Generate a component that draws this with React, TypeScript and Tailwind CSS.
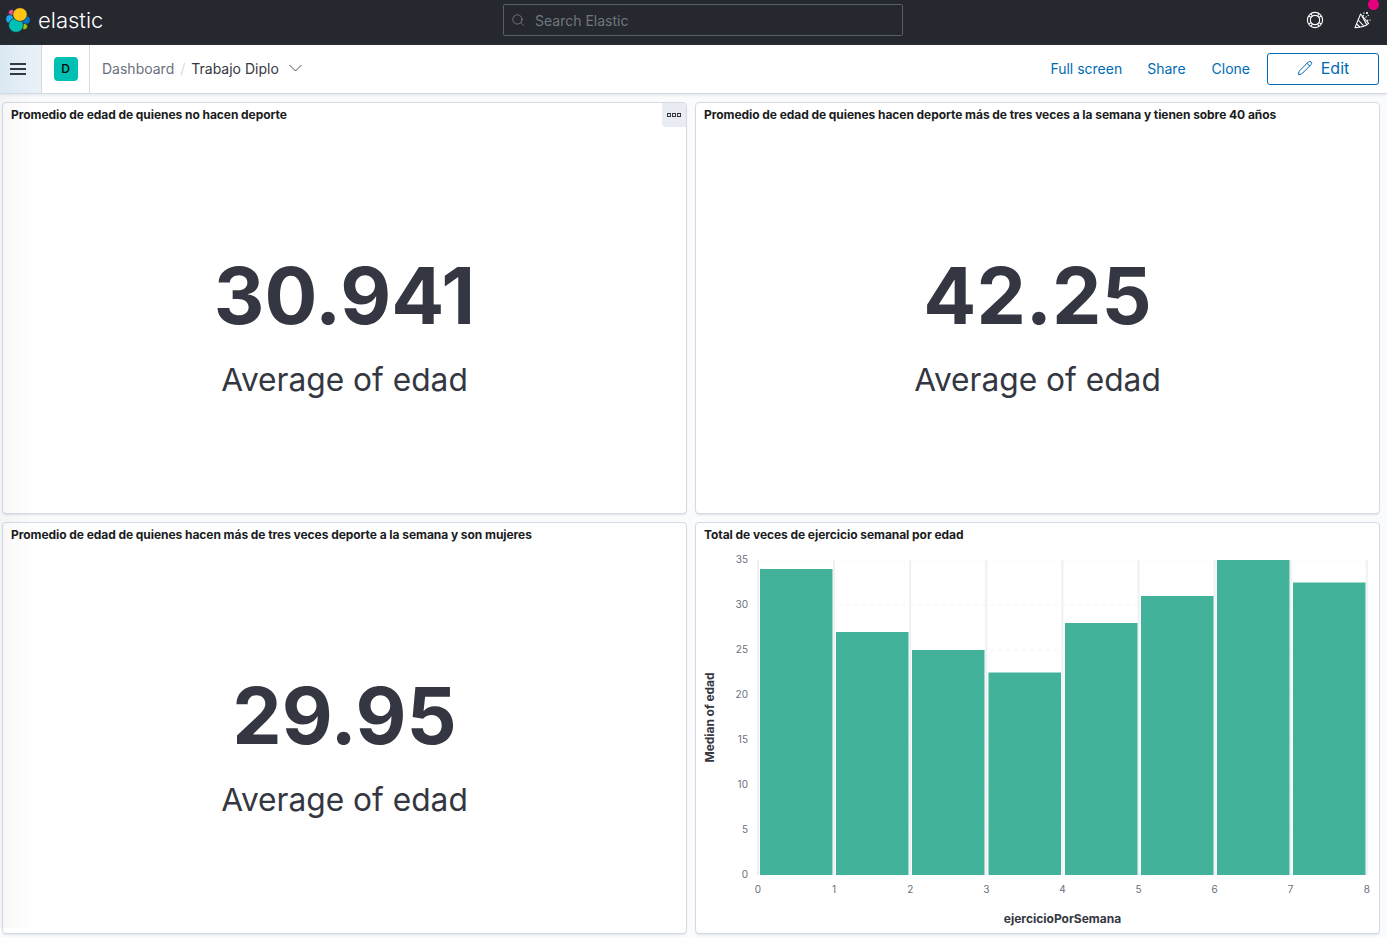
import { Pencil, Search } from "lucide-react";

const bars = [
  { x: 760, v: 34 },
  { x: 836, v: 27 },
  { x: 912, v: 25 },
  { x: 988.5, v: 22.5 },
  { x: 1065, v: 28 },
  { x: 1141, v: 31 },
  { x: 1217, v: 35 },
  { x: 1293, v: 32.5 },
];

// the svg box starts at the panel's left edge, below the title
const offsetX = 696;
const offsetY = 546;
const baseY = 875 - offsetY;
const perUnit = 9;

function ElasticLogo() {
  return (
    <svg width="26" height="26" viewBox="5 7 26 26" className="shrink-0" stroke="#25282f" strokeWidth="0.7">
      <circle cx="11.5" cy="12.5" r="3" fill="#f04e98" />
      <ellipse cx="9.8" cy="19" rx="4" ry="4.2" fill="#1ba9f5" />
      <ellipse cx="26" cy="20" rx="4.4" ry="4.4" fill="#0077cc" />
      <circle cx="24.5" cy="26.5" r="3" fill="#93c90e" />
      <ellipse cx="16" cy="25.2" rx="7.4" ry="7.2" fill="#00bfb3" />
      <ellipse cx="20" cy="14.5" rx="7.2" ry="6.8" fill="#fec514" />
    </svg>
  );
}

function HelpIcon() {
  return (
    <svg width="18" height="18" viewBox="0 0 18 18" fill="none" stroke="#fff" strokeWidth="1.1">
      <circle cx="9" cy="9" r="7.6" />
      <circle cx="9" cy="9" r="4.6" />
      <path d="M2.9 5.2 5.6 6.6M5.2 2.9 6.6 5.6M15.1 5.2 12.4 6.6M12.8 2.9 11.4 5.6M2.9 12.8 5.6 11.4M5.2 15.1 6.6 12.4M15.1 12.8 12.4 11.4M12.8 15.1 11.4 12.4" />
    </svg>
  );
}

function NewsIcon() {
  return (
    <svg width="18" height="18" viewBox="0 0 18 18" fill="none" stroke="#fff" strokeWidth="1.1" strokeLinejoin="round">
      <path d="M1 16.6 6.6 3 14.6 12.4C12 15 6 16.6 1 16.6Z" />
      <path d="M4.2 9 9.6 14.8M2.6 13 6 16M8 5 12.6 13.6" />
      <path d="M10 1.5 9.4 5.2M11.6 6.4 15 4M13 9.4 16.6 9" strokeDasharray="1.4 1.2" />
      <circle cx="13" cy="2" r="0.5" fill="#fff" />
    </svg>
  );
}

function MetricPanel({ title, value, showMenu }: { title: string; value: string; showMenu?: boolean }) {
  return (
    <div className="relative flex flex-col rounded border border-[#d3dae6] bg-white shadow-[0_2px_2px_-1px_rgba(152,162,179,0.3)]">
      <div className="h-6 px-2 pt-[5px] text-[12px] leading-[14px] font-bold tracking-[-0.06px] text-[#1a1c21]">{title}</div>
      {showMenu && (
        <div className="absolute right-0 top-0 flex h-6 w-6 items-center justify-center gap-[1px] rounded-bl rounded-tr bg-[#e9edf3]">
          <span className="h-[4px] w-[4px] border border-[#343741]" />
          <span className="h-[4px] w-[4px] border border-[#343741]" />
          <span className="h-[4px] w-[4px] border border-[#343741]" />
        </div>
      )}
      <div className="flex flex-1 flex-col items-center justify-center pt-[6px] text-[#343741]">
        <div className="text-[78.5px] leading-[100px] font-bold">{value}</div>
        <div className="mt-[14px] text-[31.7px] leading-[40px]">Average of edad</div>
      </div>
    </div>
  );
}

function BarChart() {
  const ticksY = [0, 5, 10, 15, 20, 25, 30, 35];
  const ticksX = [0, 1, 2, 3, 4, 5, 6, 7, 8];
  return (
    <svg width="683" height="386" className="block" style={{ fontFamily: "Inter, sans-serif" }}>
      {ticksY.slice(1).map((t) => (
        <line
          key={t}
          x1={758 - offsetX}
          x2={1367 - offsetX}
          y1={baseY - t * perUnit}
          y2={baseY - t * perUnit}
          stroke="#f3f4f7"
          strokeDasharray="4 4"
        />
      ))}
      {ticksX.map((t) => (
        <line
          key={t}
          x1={758 + t * 76.1 - offsetX}
          x2={758 + t * 76.1 - offsetX}
          y1={baseY - 315}
          y2={baseY}
          stroke="#eef0f4"
          strokeWidth="2"
        />
      ))}
      {bars.map((b) => (
        <rect key={b.x} x={b.x - offsetX} y={baseY - b.v * perUnit} width="72.5" height={b.v * perUnit} fill="#43b29a" />
      ))}
      {ticksY.map((t) => (
        <text key={t} x={748 - offsetX} y={baseY - t * perUnit + 2.5} textAnchor="end" fontSize="10" fill="#69707d">
          {t}
        </text>
      ))}
      {ticksX.map((t) => (
        <text key={t} x={758 + t * 76.1 - offsetX} y={893 - offsetY} textAnchor="middle" fontSize="10" fill="#69707d">
          {t}
        </text>
      ))}
      <text
        transform={`translate(${714 - offsetX} ${717.5 - offsetY}) rotate(-90)`}
        textAnchor="middle"
        fontSize="12"
        fontWeight="700"
        letterSpacing="-0.06"
        fill="#343741"
      >
        Median of edad
      </text>
      <text x={1062.5 - offsetX} y={923 - offsetY} textAnchor="middle" fontSize="12" fontWeight="700" fill="#343741">
        ejercicioPorSemana
      </text>
    </svg>
  );
}

export default function App() {
  return (
    <div className="h-[938px] overflow-hidden bg-[#fafbfd] font-['Inter',sans-serif]">
      <header className="flex h-[45px] items-center bg-[#25282f] pb-[5px] pl-[5px] pr-[15px]">
        <div className="flex w-[498px] items-center gap-[7px]">
          <ElasticLogo />
          <span className="text-[22px] leading-none font-light text-white">elastic</span>
        </div>
        <div className="flex h-[32px] w-[400px] items-center gap-[10px] rounded-[2px] border border-[#585c64] pl-[7px]">
          <Search size={14} strokeWidth={1} className="text-[#a0a3a8]" />
          <span className="text-[14px] text-[#72767d]">Search Elastic</span>
        </div>
        <div className="relative flex flex-1 items-center justify-end gap-[30px]">
          <HelpIcon />
          <NewsIcon />
          <span className="absolute -top-[12px] right-[-7px] h-[11px] w-[11px] rounded-full bg-[#e6007e]" />
        </div>
      </header>

      <nav className="flex h-[49px] items-center border-b border-[#d3dae6] bg-white pr-2 shadow-[0_1px_3px_rgba(152,162,179,0.25)]">
        <div className="flex h-full w-[42px] items-center border-r border-[#d3dae6] bg-gradient-to-r from-[#dbe8f2] to-[#eaf2f8] pb-[1px] pl-[10px]">
          <div className="flex w-[16px] flex-col gap-[3px]">
            <span className="h-[2px] bg-[#343741]" />
            <span className="h-[2px] bg-[#343741]" />
            <span className="h-[2px] bg-[#343741]" />
          </div>
        </div>
        <div className="flex h-full w-[48px] items-center justify-center border-r border-[#d3dae6]">
          <div className="flex h-6 w-6 items-center justify-center rounded bg-[#00bfb3] text-[12px] font-medium text-black">D</div>
        </div>
        <div className="flex flex-1 items-center pb-[2px] pl-[12px] text-[14px]">
          <span className="text-[#69707d]">Dashboard</span>
          <span className="mx-[6px] text-[#d3dae6]">/</span>
          <span className="text-[#343741]">Trabajo Diplo</span>
          <svg width="13" height="8" viewBox="0 0 13 8" fill="none" stroke="#343741" strokeWidth="0.9" className="ml-[10px]">
            <path d="M0.5 1 6.5 7 12.5 1" />
          </svg>
        </div>
        <div className="flex items-center text-[14px] text-[#006bb4]">
          <span className="mb-[2px] mr-[25px]">Full screen</span>
          <span className="mb-[2px] mr-[26px]">Share</span>
          <span className="mb-[2px] mr-[17px]">Clone</span>
          <div className="flex h-[32px] w-[112px] items-center justify-center gap-[8px] rounded-[3px] border border-[#006bb4] pb-[2px] text-[16px]">
            <Pencil size={16} strokeWidth={1.5} />
            <span>Edit</span>
          </div>
        </div>
      </nav>

      <main className="relative grid grid-cols-[685px_685px] grid-rows-[412px_412px] gap-2 pl-[2px] pt-2">
        <MetricPanel title="Promedio de edad de quienes no hacen deporte" value="30.941" showMenu />
        <MetricPanel
          title="Promedio de edad de quienes hacen deporte más de tres veces a la semana y tienen sobre 40 años"
          value="42.25"
        />
        <MetricPanel
          title="Promedio de edad de quienes hacen más de tres veces deporte a la semana y son mujeres"
          value="29.95"
        />
        <div className="rounded border border-[#d3dae6] bg-white shadow-[0_2px_2px_-1px_rgba(152,162,179,0.3)]">
          <div className="h-[23px] px-2 pt-[5px] text-[12px] leading-[14px] font-bold tracking-[-0.06px] text-[#1a1c21]">
            Total de veces de ejercicio semanal por edad
          </div>
          <BarChart />
        </div>
        <div className="pointer-events-none absolute bottom-[6px] left-0 top-0 w-[34px] bg-gradient-to-r from-black/[0.03] to-transparent" />
      </main>
    </div>
  );
}
